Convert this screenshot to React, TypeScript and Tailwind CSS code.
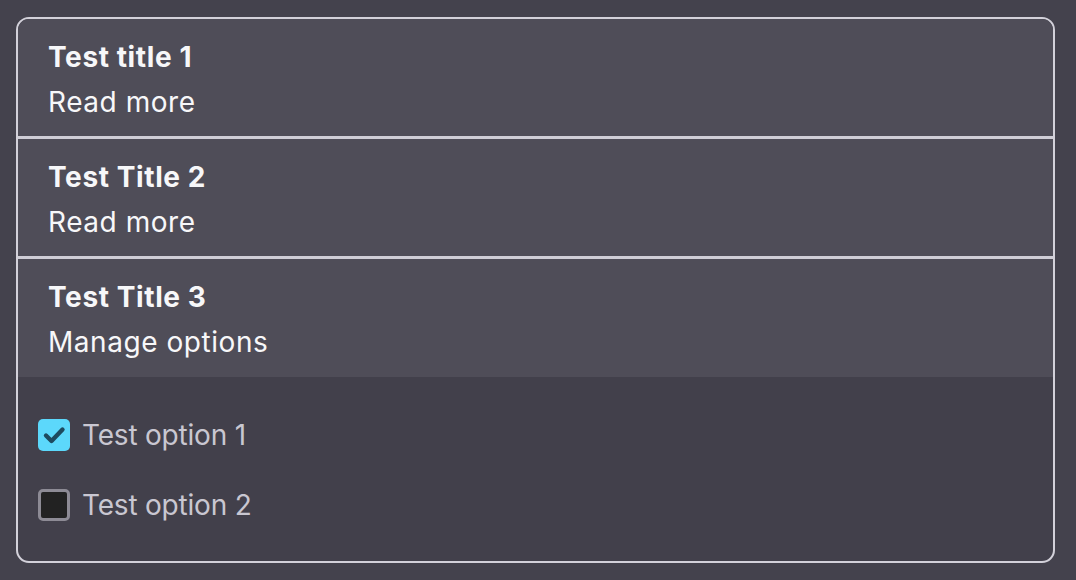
import React, { useState } from 'react';

const sections = [
    { id: 1, title: 'Test title 1', action: 'Read more' },
    { id: 2, title: 'Test Title 2', action: 'Read more' },
    { id: 3, title: 'Test Title 3', action: 'Manage options' },
];

function Checkbox({ checked, onChange }: { checked: boolean; onChange: () => void }) {
    return (
        <button
            onClick={onChange}
            className={`w-8 h-8 rounded-[5px] flex items-center justify-center shrink-0 ${
                checked ? 'bg-[#5cd8fb]' : 'bg-[#222222] border-[3px] border-[#8d8b95]'
            }`}
        >
            {checked && (
                <svg width="26" height="26" viewBox="0 0 26 26" fill="none">
                    <path d="M5 13.5 L10.5 19 L21.5 7.5" stroke="#1d4a5f" strokeWidth="4.4" strokeLinecap="round" strokeLinejoin="round" />
                </svg>
            )}
        </button>
    );
}

export default function App() {
    const [options, setOptions] = useState([
        { label: 'Test option 1', checked: true },
        { label: 'Test option 2', checked: false },
    ]);

    const toggle = (i: number) => {
        setOptions(options.map((o, idx) => (idx === i ? { ...o, checked: !o.checked } : o)));
    };

    return (
        <div className="w-[1076px] h-[580px] bg-[#44424d] pt-[17px] pl-[16px]" style={{ fontFamily: 'Inter, "Noto Sans", sans-serif' }}>
            <div className="w-[1039px] h-[546px] border-2 border-[#d3d1da] rounded-[13px] overflow-hidden bg-[#42404b] flex flex-col">
                {sections.map((s, i) => (
                    <div
                        key={s.id}
                        className={`bg-[#4f4d58] pl-[30px] pt-[17px] shrink-0 ${i < 2 ? 'border-b-[3px] border-[#cfcdd6] h-[120px]' : 'h-[118px]'}`}
                    >
                        <h3 className="text-[28px] leading-[42px] font-bold tracking-[0.6px] text-[#f7f7f9]">{s.title}</h3>
                        <p className="text-[28px] leading-[42px] mt-[3px] tracking-[0.55px] text-[#f7f7f9]">{s.action}</p>
                    </div>
                ))}

                {/* Options for section 3 */}
                <div className="flex flex-col gap-[38px] pl-[20px] pt-[42px]">
                    {options.map((o, i) => (
                        <label key={o.label} className="flex items-center gap-3 h-8 cursor-pointer">
                            <Checkbox checked={o.checked} onChange={() => toggle(i)} />
                            <span className="text-[28px] leading-none tracking-[-0.2px] text-[#c9c7d1]">{o.label}</span>
                        </label>
                    ))}
                </div>
            </div>
        </div>
    );
}
